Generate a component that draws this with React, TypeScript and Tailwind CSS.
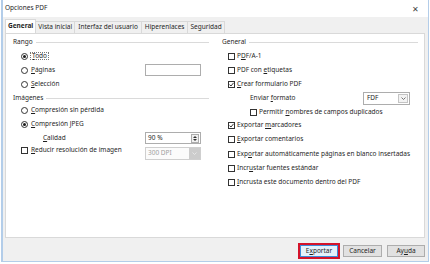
import React from "react";

const Radio = ({ on }: { on?: boolean }) => (
  <span className="w-[7px] h-[7px] shrink-0 rounded-full border border-[#333] bg-white flex items-center justify-center">
    {on && <span className="w-[3px] h-[3px] rounded-full bg-[#1a1a1a]" />}
  </span>
);

const Check = ({ on }: { on?: boolean }) => (
  <span className="w-[7px] h-[7px] shrink-0 border border-[#333] bg-white flex items-center justify-center">
    {on && (
      <svg width="5" height="5" viewBox="0 0 5 5">
        <path d="M0.5 2.6 L2 4 L4.6 0.8" fill="none" stroke="#222" strokeWidth="0.9" />
      </svg>
    )}
  </span>
);

const Heading = ({ children }: { children: React.ReactNode }) => (
  <div className="flex items-center h-[13px]">
    <span>{children}</span>
    <span className="flex-1 h-px bg-[#dadada] ml-[3px]" />
  </div>
);

const Chevron = ({ color = "#555" }: { color?: string }) => (
  <svg width="5" height="3" viewBox="0 0 5 3">
    <path d="M0.5 0.5 L2.5 2.5 L4.5 0.5" fill="none" stroke={color} strokeWidth="0.8" />
  </svg>
);

export default function App() {
  return (
    <div className="w-[430px] h-[264px] bg-white text-[6.5px] leading-none text-[#1f1f1f] font-['Noto_Sans',sans-serif]">
      <div className="ml-px w-[428px] h-[262px] border-l-2 border-r border-b border-[#b3cde9] flex flex-col">
        {/* title bar */}
        <div className="h-[17px] bg-white flex items-center justify-between pl-[2px] pr-[9px]">
          <span>Opciones PDF</span>
          <span className="text-[8px] text-[#444]">✕</span>
        </div>

        {/* tabs */}
        <div className="h-[16px] bg-[#f0f0f0] flex items-end pl-[2px]">
          <div className="h-[14px] px-[2px] bg-white border border-b-0 border-[#d9d9d9] flex items-center font-bold">General</div>
          <div className="h-[12px] px-[2px] border-t border-r border-[#d9d9d9] flex items-center">Vista inicial</div>
          <div className="h-[12px] px-[3px] border-t border-r border-[#d9d9d9] flex items-center">Interfaz del usuario</div>
          <div className="h-[12px] px-[3px] border-t border-r border-[#d9d9d9] flex items-center">Hiperenlaces</div>
          <div className="h-[12px] px-[2px] border-t border-r border-[#d9d9d9] flex items-center">Seguridad</div>
        </div>

        {/* panel */}
        <div className="bg-[#f0f0f0] pl-[2px] pr-[3px]">
          <div className="h-[205px] bg-white border border-[#d9d9d9] grid grid-cols-[209px_1fr] pt-[2px]">
            {/* left column */}
            <div className="flex flex-col pl-[7px] pr-[6px]">
              <Heading>Rango</Heading>
              <div className="h-[14px] flex items-center pl-[8px] gap-[3px]">
                <Radio on />
                <span className="outline outline-1 outline-dotted outline-[#777] px-px"><u>T</u>odo</span>
              </div>
              <div className="h-[14px] flex items-center pl-[8px] gap-[3px]">
                <Radio />
                <span className="flex-1"><u>P</u>áginas</span>
                <span className="w-[56px] h-[12px] mr-[8px] border border-[#adadad] bg-white" />
              </div>
              <div className="h-[14px] flex items-center pl-[8px] gap-[3px]">
                <Radio />
                <span><u>S</u>elección</span>
              </div>
              <div className="mt-px h-[12px] flex items-center">
                <span>Imágenes</span>
                <span className="flex-1 h-px bg-[#dadada] ml-[3px]" />
              </div>
              <div className="h-[13px] flex items-center pl-[8px] gap-[3px]">
                <Radio />
                <span><u>C</u>ompresión sin pérdida</span>
              </div>
              <div className="h-[14px] flex items-center pl-[8px] gap-[3px]">
                <Radio on />
                <span><u>C</u>ompresión JPEG</span>
              </div>
              <div className="h-[14px] flex items-center pl-[30px]">
                <span className="flex-1"><u>C</u>alidad</span>
                <span className="w-[56px] h-[12px] mr-[8px] border border-[#adadad] bg-white flex items-center justify-between pl-[2px] pr-px">
                  <span>90 %</span>
                  <span className="w-[8px] h-[9px] border border-[#adadad] bg-[#f0f0f0] flex flex-col items-center justify-center gap-px">
                    <svg width="4" height="2" viewBox="0 0 4 2"><path d="M0 2 L2 0 L4 2 Z" fill="#333" /></svg>
                    <svg width="4" height="2" viewBox="0 0 4 2"><path d="M0 0 L2 2 L4 0 Z" fill="#333" /></svg>
                  </span>
                </span>
              </div>
              <div className="h-[15px] flex items-start pt-[2px] pl-[8px] gap-[3px]">
                <span className="h-[7px] flex items-center"><Check /></span>
                <span className="flex-1 h-[7px] flex items-center"><u>R</u>educir resolución de imagen</span>
                <span className="w-[56px] h-[13px] mr-[8px] border border-[#cfcfcf] bg-[#fbfbfb] flex items-center justify-between pl-[2px] text-[#a0a0a0]">
                  <span>300 DPI</span>
                  <span className="w-[11px] h-full bg-[#cccccc] flex items-center justify-center">
                    <Chevron color="#eee" />
                  </span>
                </span>
              </div>
            </div>

            {/* right column */}
            <div className="flex flex-col pl-[7px] pr-[6px]">
              <Heading>General</Heading>
              <div className="h-[14px] flex items-center pl-[6px] gap-[2px]">
                <Check />
                <span>P<u>D</u>F/A-1</span>
              </div>
              <div className="h-[14px] flex items-center pl-[6px] gap-[2px]">
                <Check />
                <span>PDF con <u>e</u>tiquetas</span>
              </div>
              <div className="h-[14px] flex items-center pl-[6px] gap-[2px]">
                <Check on />
                <span><u>C</u>rear formulario PDF</span>
              </div>
              <div className="h-[15px] flex items-center pl-[28px]">
                <span className="flex-1">Enviar <u>f</u>ormato</span>
                <span className="w-[47px] h-[13px] border border-[#adadad] bg-white flex items-center justify-between pl-[3px] pr-px mr-[8px]">
                  <span>FDF</span>
                  <span className="w-[10px] h-[9px] border border-[#c4c4c4] bg-[#f3f3f3] flex items-center justify-center">
                    <Chevron />
                  </span>
                </span>
              </div>
              <div className="h-[12px] flex items-center pl-[28px] gap-[2px]">
                <Check />
                <span>Permitir <u>n</u>ombres de campos duplicados</span>
              </div>
              <div className="h-[14px] flex items-center pl-[6px] gap-[2px]">
                <Check on />
                <span>Exportar <u>m</u>arcadores</span>
              </div>
              <div className="h-[15px] flex items-center pl-[6px] gap-[2px]">
                <Check />
                <span><u>E</u>xportar comentarios</span>
              </div>
              <div className="h-[15px] flex items-center pl-[6px] gap-[2px]">
                <Check />
                <span>Exp<u>o</u>rtar automáticamente páginas en blanco insertadas</span>
              </div>
              <div className="h-[13px] flex items-center pl-[6px] gap-[2px]">
                <Check />
                <span>Incr<u>u</u>star fuentes estándar</span>
              </div>
              <div className="h-[14px] flex items-center pl-[6px] gap-[2px]">
                <Check />
                <span><u>I</u>ncrusta este documento dentro del PDF</span>
              </div>
            </div>
          </div>
        </div>

        {/* bottom buttons */}
        <div className="flex-1 bg-[#f0f0f0] flex items-start justify-end pt-[5px] pr-[3px]">
          <div className="border-2 border-[#d4132a]">
            <div className="w-[38px] h-[12px] border border-[#3c8ad8] bg-[#e5f1fb] flex items-center justify-center">
              <span>E<u>x</u>portar</span>
            </div>
          </div>
          <div className="ml-[3px] mt-[2px] w-[39px] h-[12px] border border-[#adadad] bg-[#e1e1e1] flex items-center justify-center">
            Cancelar
          </div>
          <div className="ml-[5px] mt-[2px] w-[38px] h-[12px] border border-[#adadad] bg-[#e1e1e1] flex items-center justify-center">
            <span>Ay<u>u</u>da</span>
          </div>
        </div>
      </div>
    </div>
  );
}
